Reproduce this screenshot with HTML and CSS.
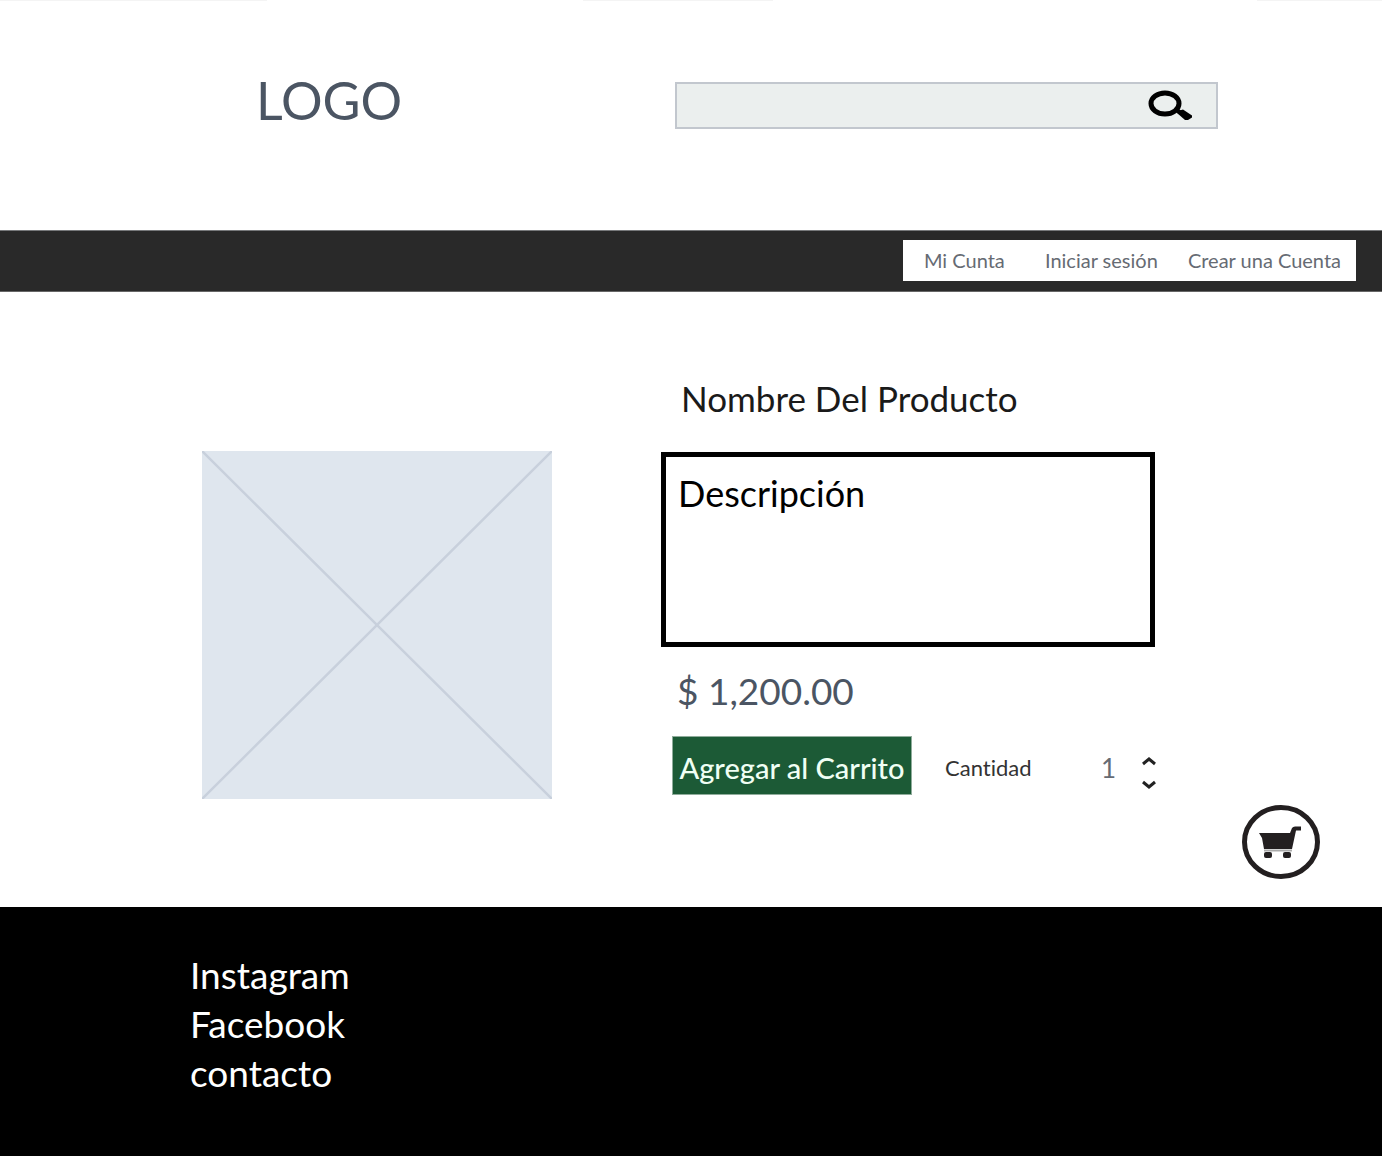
FILE: index.html
```html
<!DOCTYPE html>
<html lang="es">
<head>
<meta charset="utf-8">
<meta name="viewport" content="width=device-width, initial-scale=1">
<title>Nombre Del Producto</title>
<link rel="stylesheet" href="styles.css">
</head>
<body>
<header class="header">
  <a class="logo" href="#">LOGO</a>
  <form class="search" role="search">
    <input class="search-input" type="search" aria-label="Buscar">
    <button class="search-button" type="button" aria-label="Buscar">
      <svg width="46" height="34" viewBox="0 0 46 34" aria-hidden="true">
        <ellipse cx="17" cy="14.500" rx="14" ry="10.500" fill="none" stroke="#000" stroke-width="5"/>
        <path d="M27 20l6 4" stroke="#000" stroke-width="4"/>
        <path d="M29 24l1-2 5-1.500 9 6v2l-4 2.500h-3z" fill="#000"/>
      </svg>
    </button>
  </form>
</header>
<nav class="bar" aria-label="Cuenta">
  <div class="account">
    <a href="#">Mi Cunta</a>
    <a href="#">Iniciar sesión</a>
    <a href="#">Crear una Cuenta</a>
  </div>
</nav>
<main class="product">
  <svg class="photo" viewBox="0 0 350 348" role="img" aria-label="Imagen del producto">
    <rect width="350" height="348" fill="#dfe6ee"/>
    <path d="M0 0l350 348M350 0L0 348" stroke="#c8d0dc" stroke-width="2.500"/>
  </svg>
  <section class="details">
    <h1 class="title">Nombre Del Producto</h1>
    <p class="description">Descripción</p>
    <p class="price">$ 1,200.00</p>
    <form class="purchase">
      <button class="add" type="button">Agregar al Carrito</button>
      <label class="quantity-label" for="quantity">Cantidad</label>
      <input class="quantity" id="quantity" type="number" min="1" value="1">
      <div class="stepper">
        <button type="button" aria-label="Aumentar cantidad">
          <svg width="16" height="10" viewBox="0 0 16 10" aria-hidden="true"><path d="M2 8l6-5 6 5"/></svg>
        </button>
        <button type="button" aria-label="Reducir cantidad">
          <svg width="16" height="10" viewBox="0 0 16 10" aria-hidden="true"><path d="M2 2l6 5 6-5"/></svg>
        </button>
      </div>
    </form>
  </section>
  <a class="cart" href="#" aria-label="Carrito">
    <svg width="78" height="74" viewBox="0 0 78 74" aria-hidden="true">
      <ellipse cx="39" cy="37" rx="36.500" ry="34.500" fill="#fff" stroke="#231f20" stroke-width="5"/>
      <path d="M17 28h31l2-5q1-1.500 3-1.500h6v4h-5l-4 18.500H22l-2-11z" fill="#231f20"/>
      <path d="M22 45.500h28" stroke="#aaa" stroke-width="2"/>
      <rect x="22" y="47" width="8" height="6" rx="2" fill="#231f20"/>
      <rect x="41" y="47" width="8" height="6" rx="2" fill="#231f20"/>
    </svg>
  </a>
</main>
<footer class="footer">
  <a href="#">Instagram</a>
  <a href="#">Facebook</a>
  <a href="#">contacto</a>
</footer>
</body>
</html>
```
FILE: styles.css
```css
* { box-sizing: border-box; }

body {
  display: flex;
  flex-direction: column;
  min-height: 100vh;
  margin: 0;
  background: #fff;
  color: #000;
  font-family: Lato, "Open Sans", sans-serif;
  font-variant-ligatures: none;
}

a { color: inherit; text-decoration: none; }

button {
  padding: 0;
  border: 0;
  background: none;
  font: inherit;
  cursor: pointer;
}

.header {
  display: flex;
  align-items: flex-start;
  justify-content: space-between;
  gap: 32px;
  padding: 82px 164px 101px 256px;
  background: linear-gradient(90deg, #f4f4f4 267px, #fff 267px 583px, #f4f4f4 583px 773px, #fff 773px 1257px, #f4f4f4 1257px) 0 0 / 100% 1px no-repeat;
}

.logo {
  color: #4b5563;
  font-size: 52px;
  line-height: 37px;
}

.search {
  display: flex;
  align-items: center;
  flex: 0 1 543px;
  height: 47px;
  padding-right: 22px;
  border: 2px solid #c2c7ce;
  background: #ebefee;
}

.search-input {
  flex: 1;
  min-width: 0;
  height: 100%;
  padding: 0 12px;
  border: 0;
  background: transparent;
  font: inherit;
  font-size: 20px;
}

.search-button { display: flex; }

.bar {
  display: flex;
  justify-content: flex-end;
  padding: 9px 26px 10px;
  border-top: 1px solid #77797b;
  border-bottom: 1px solid #666;
  background: #292929;
}

.account {
  display: grid;
  grid-template-columns: 121px 143px auto;
  padding: 0 15px 0 21px;
  background: #fff;
  color: #666b73;
  font-size: 20px;
  line-height: 41px;
}

.product {
  display: grid;
  grid-template-columns: 350px 1fr auto;
  padding: 82px 62px 28px 202px;
}

.photo {
  width: 100%;
  margin-top: 77px;
}

.details {
  margin: 0 87px 0 109px;
}

.title {
  margin: 0 0 30px 20px;
  font-size: 35px;
  font-weight: 400;
  line-height: 48px;
  color: #1a1a1a;
}

.description {
  min-height: 195px;
  margin: 0;
  padding: 12px;
  border: 5px solid #000;
  font-size: 36px;
  line-height: 48px;
}

.price {
  margin: 20px 0 21px 16px;
  color: #4b5563;
  font-size: 37px;
  line-height: 48px;
}

.purchase {
  display: flex;
  align-items: center;
  margin-left: 11px;
}

.add {
  width: 240px;
  height: 59px;
  padding-top: 4px;
  border: 1px solid #8fac9b;
  background: #1c5a36;
  color: #f0fff4;
  font-size: 29px;
  font-weight: 500;
  line-height: 53px;
  white-space: nowrap;
}

.quantity-label {
  margin: 4px 0 0 33px;
  color: #333;
  font-size: 22px;
}

.quantity {
  width: 40px;
  margin: 4px 0 0 auto;
  padding: 0;
  border: 0;
  background: none;
  color: #666b73;
  font: inherit;
  font-size: 26px;
  appearance: textfield;
}

.quantity::-webkit-inner-spin-button { appearance: none; }

.stepper {
  display: flex;
  flex-direction: column;
  gap: 14px;
  margin-top: 14px;
  margin-right: -2px;
}

.stepper button { display: flex; }

.stepper path {
  fill: none;
  stroke: #222;
  stroke-width: 3;
}

.cart {
  display: flex;
  grid-row: 2;
  grid-column: 3;
  margin-top: 6px;
}

.footer {
  display: flex;
  flex: 1;
  flex-direction: column;
  align-items: flex-start;
  padding: 43px 190px 59px;
  background: #000;
  color: #fff;
  font-size: 37px;
  line-height: 49px;
}
```
